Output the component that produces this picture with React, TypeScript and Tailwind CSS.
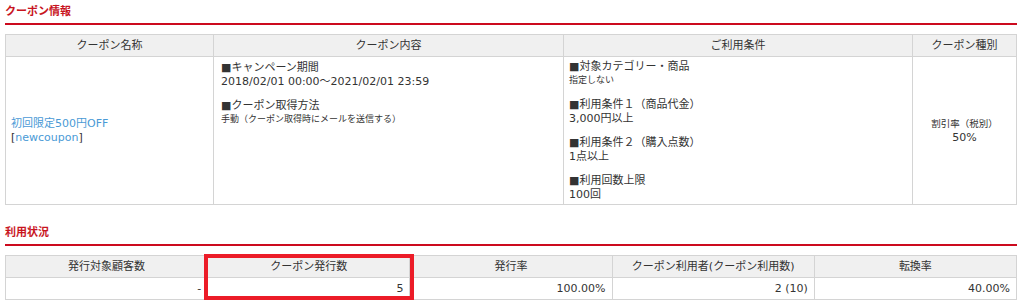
const FONT = { fontFamily: '"DejaVu Sans", "Noto Sans CJK JP", sans-serif' };

function SectionTitle({ children }: { children: React.ReactNode }) {
  return (
    <div>
      <h2 className="text-[11px] font-bold leading-[14px] text-[#c8141e] pt-[5px] pb-[4px]">{children}</h2>
      <div className="h-[2px] bg-[#cc0a1e]" />
    </div>
  );
}

const th = "bg-[#f0f0f0] border border-[#d4d4d4] h-[22px] font-normal text-center align-middle";
const td = "border border-[#d4d4d4] align-top";

function Block({ title, body, small }: { title: string; body: string; small?: boolean }) {
  return (
    <div className="mt-[11px] first:mt-0">
      <div>■{title}</div>
      <div className={small ? "text-[9px]" : ""}>{body}</div>
    </div>
  );
}

export default function App() {
  return (
    <div className="bg-white w-[1024px] h-[306px] pl-[5px] pr-[7px] text-[#333] text-[11px] leading-[13.5px]" style={FONT}>
      <SectionTitle>クーポン情報</SectionTitle>

      <table className="w-full table-fixed border-collapse mt-[9px]">
        <colgroup>
          <col className="w-[208px]" />
          <col className="w-[350px]" />
          <col className="w-[349px]" />
          <col />
        </colgroup>
        <thead>
          <tr>
            <th className={th}>クーポン名称</th>
            <th className={th}>クーポン内容</th>
            <th className={th}>ご利用条件</th>
            <th className={th}>クーポン種別</th>
          </tr>
        </thead>
        <tbody>
          <tr className="h-[148px]">
            <td className="border border-[#d4d4d4] align-middle pl-[5px]">
              <div className="text-[#4a9ad6]">初回限定500円OFF</div>
              <div>
                [<span className="text-[#4a9ad6]">newcoupon</span>]
              </div>
            </td>
            <td className={`${td} px-[7px] py-[4px]`}>
              <Block title="キャンペーン期間" body="2018/02/01 00:00～2021/02/01 23:59" />
              <Block title="クーポン取得方法" body="手動（クーポン取得時にメールを送信する）" small />
            </td>
            <td className={`${td} px-[5px] py-[3px]`}>
              <Block title="対象カテゴリー・商品" body="指定しない" small />
              <Block title="利用条件１（商品代金）" body="3,000円以上" />
              <Block title="利用条件２（購入点数）" body="1点以上" />
              <Block title="利用回数上限" body="100回" />
            </td>
            <td className="border border-[#d4d4d4] align-middle text-center">
              <div className="text-[9.5px]">割引率（税別）</div>
              <div>50%</div>
            </td>
          </tr>
        </tbody>
      </table>

      <div className="mt-[16px]">
        <SectionTitle>利用状況</SectionTitle>
      </div>

      <div className="relative mt-[9px]">
        <table className="w-full table-fixed border-collapse">
          <thead>
            <tr>
              <th className={th}>発行対象顧客数</th>
              <th className={th}>クーポン発行数</th>
              <th className={th}>発行率</th>
              <th className={th}>クーポン利用者(クーポン利用数)</th>
              <th className={th}>転換率</th>
            </tr>
          </thead>
          <tbody>
            <tr className="h-[22px]">
              {["-", "5", "100.00%", "2 (10)", "40.00%"].map((v, i) => (
                <td key={i} className="border border-[#d4d4d4] text-right pr-[6px] align-middle">
                  {v}
                </td>
              ))}
            </tr>
          </tbody>
        </table>
        {/* highlight annotation */}
        <div className="absolute left-[199px] top-[-1px] w-[210px] h-[46px] border-[4px] border-[#ec1c28] pointer-events-none" />
      </div>
    </div>
  );
}
